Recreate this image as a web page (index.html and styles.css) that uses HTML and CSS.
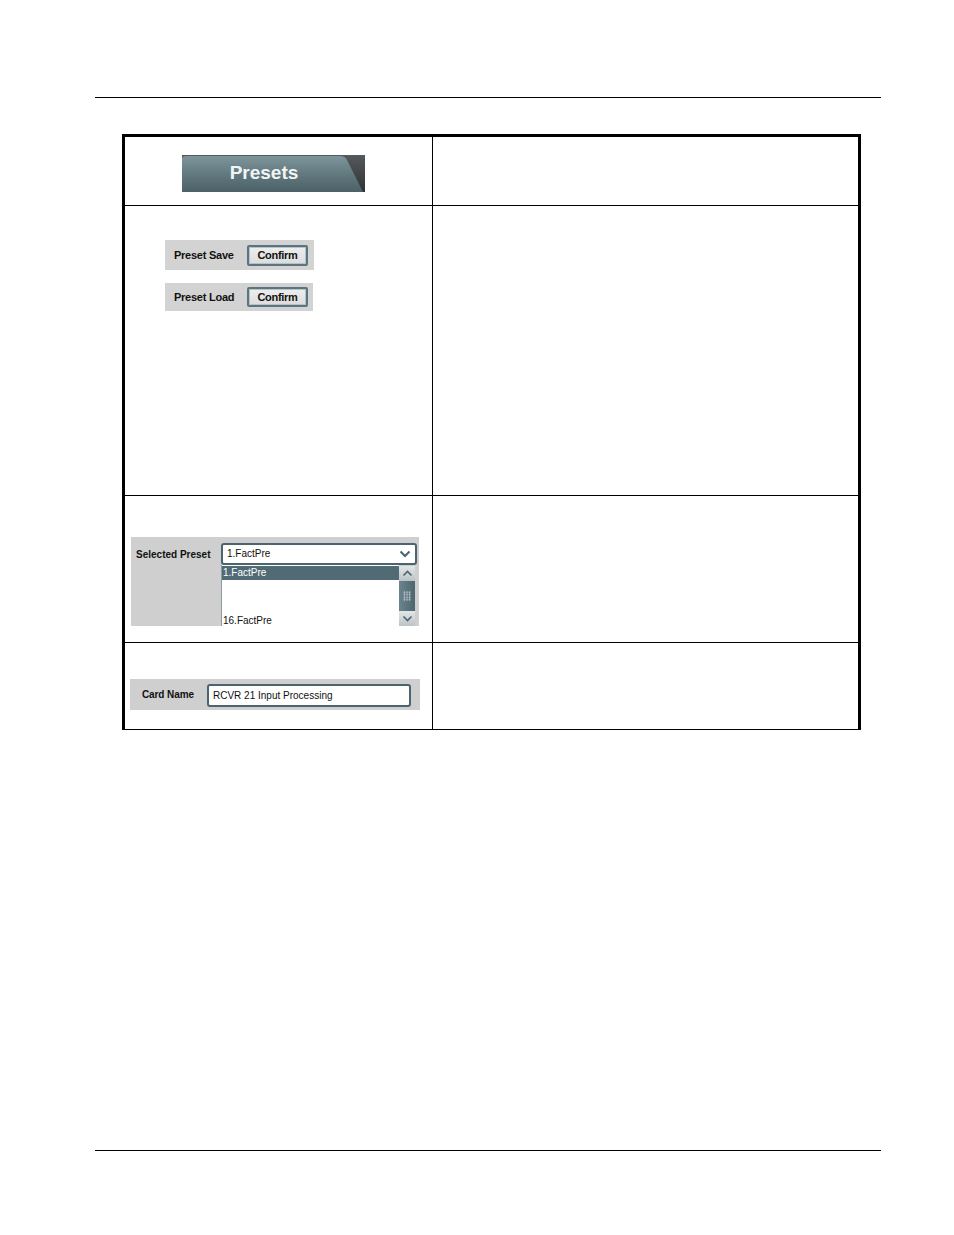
FILE: index.html
```html
<!DOCTYPE html>
<html>
<head>
<meta charset="utf-8">
<link rel="stylesheet" href="styles.css">
</head>
<body>
<div class="page">
  <div class="rule top-rule"></div>
  <div class="table">
    <div class="row r1">
      <div class="cell left c1">
        <svg class="tab" width="183" height="37" viewBox="0 0 183 37">
          <defs>
            <linearGradient id="tg" x1="0" y1="0" x2="0" y2="1">
              <stop offset="0" stop-color="#7e959c"/>
              <stop offset="0.5" stop-color="#627980"/>
              <stop offset="1" stop-color="#4b6067"/>
            </linearGradient>
            <linearGradient id="dg" x1="0" y1="0" x2="0" y2="1">
              <stop offset="0" stop-color="#55595b"/>
              <stop offset="1" stop-color="#2f3335"/>
            </linearGradient>
          </defs>
          <rect x="0" y="0" width="183" height="37" fill="url(#dg)"/>
          <path d="M0,37 L0,4 Q0,1 4,1 L158,1 Q163,1 165,5 L181,37 Z" fill="url(#tg)"/>
          <text x="82" y="24" text-anchor="middle" class="tab-text">Presets</text>
        </svg>
      </div>
      <div class="cell right"></div>
    </div>
    <div class="row r2">
      <div class="cell left c2">
        <div class="btn-panel save">
          <span class="lbl">Preset Save</span>
          <span class="btn">Confirm</span>
        </div>
        <div class="btn-panel load">
          <span class="lbl">Preset Load</span>
          <span class="btn">Confirm</span>
        </div>
      </div>
      <div class="cell right"></div>
    </div>
    <div class="row r3">
      <div class="cell left c3">
        <div class="sel-panel">
          <div class="sel-label">Selected Preset</div>
          <div class="sel-main">
            <div class="combo">
              <span class="combo-text">1.FactPre</span>
              <svg class="chev" width="12" height="8" viewBox="0 0 12 8"><path d="M1.5,1.5 L6,6 L10.5,1.5" fill="none" stroke="#4a6470" stroke-width="2"/></svg>
            </div>
            <div class="list">
              <div class="items">
                <div class="item selected">1.FactPre</div>
                <div class="item last">16.FactPre</div>
              </div>
              <div class="sbar">
                <div class="sbtn up"><svg width="11" height="7" viewBox="0 0 11 7"><path d="M1.5,5.5 L5.5,1.5 L9.5,5.5" fill="none" stroke="#4a6470" stroke-width="1.6"/></svg></div>
                <div class="thumb"><span class="grip"></span></div>
                <div class="sbtn down"><svg width="11" height="7" viewBox="0 0 11 7"><path d="M1.5,1.5 L5.5,5.5 L9.5,1.5" fill="none" stroke="#4a6470" stroke-width="1.6"/></svg></div>
              </div>
            </div>
          </div>
        </div>
      </div>
      <div class="cell right"></div>
    </div>
    <div class="row r4">
      <div class="cell left c4">
        <div class="name-panel">
          <span class="name-label">Card Name</span>
          <div class="textbox">RCVR 21 Input Processing</div>
        </div>
      </div>
      <div class="cell right"></div>
    </div>
  </div>
  <div class="spacer"></div>
  <div class="rule bottom-rule"></div>
</div>
</body>
</html>
```

FILE: styles.css
```css
html, body {
  margin: 0;
  padding: 0;
  background: #ffffff;
}
body {
  font-family: "Liberation Sans", Arial, sans-serif;
  color: #111;
}
.page {
  width: 954px;
  height: 1235px;
  display: flex;
  flex-direction: column;
}
.rule {
  height: 1px;
  background: #000;
  margin-left: 95px;
  width: 786px;
  flex: none;
}
.top-rule {
  margin-top: 97px;
}
.table {
  margin-top: 36px;
  margin-left: 122px;
  width: 739px;
  box-sizing: border-box;
  border-top: 3px solid #000;
  border-left: 3px solid #000;
  border-right: 3px solid #000;
  border-bottom: 1px solid #000;
  display: flex;
  flex-direction: column;
  flex: none;
}
.row {
  display: flex;
  border-bottom: 1px solid #000;
  flex: none;
}
.row.r4 {
  border-bottom: none;
}
.r1 { height: 68px; }
.r2 { height: 289px; }
.r3 { height: 146px; }
.r4 { height: 86px; }
.cell.left {
  width: 308px;
  flex: none;
  border-right: 1px solid #000;
  box-sizing: border-box;
}
.cell.right {
  flex: 1;
  min-width: 0;
}
.c1 {
  padding: 18px 0 0 57px;
}
.tab { display: block; }
.tab-text {
  font-family: "Liberation Sans", Arial, sans-serif;
  font-weight: bold;
  font-size: 19px;
  fill: #f2f4f4;
}
.c2 {
  padding: 34px 0 0 40px;
  display: flex;
  flex-direction: column;
  gap: 13px;
}
.btn-panel {
  background: #d3d3d3;
  width: 149px;
  display: flex;
  align-items: center;
  box-sizing: border-box;
  padding-left: 9px;
}
.btn-panel.save { height: 30px; }
.btn-panel.load { height: 28px; width: 148px; }
.lbl {
  font-weight: bold;
  font-size: 11px;
  letter-spacing: -0.25px;
  width: 73px;
}
.btn {
  width: 61px;
  height: 21px;
  box-sizing: border-box;
  border: 2px solid #5b7580;
  border-radius: 2px;
  background: linear-gradient(#eeeeee, #dcdcdc);
  font-size: 11px;
  font-weight: bold;
  letter-spacing: -0.3px;
  display: flex;
  align-items: center;
  justify-content: center;
  box-shadow: inset 0 0 0 1px #b7c2c6;
}
.load .btn { height: 20px; }
.c3 {
  padding: 41px 0 0 6px;
}
.sel-panel {
  width: 288px;
  height: 89px;
  background: #cfcfcf;
  display: flex;
  overflow: hidden;
}
.sel-label {
  font-weight: bold;
  font-size: 10px;
  width: 90px;
  padding: 12px 0 0 5px;
  box-sizing: border-box;
}
.sel-main {
  display: flex;
  flex-direction: column;
  padding-top: 6px;
}
.combo {
  width: 196px;
  height: 22px;
  box-sizing: border-box;
  border: 2px solid #4a6470;
  border-radius: 3px;
  background: #fff;
  display: flex;
  align-items: center;
  justify-content: space-between;
  padding: 0 4px 0 4px;
  font-size: 10px;
}
.chev { display: block; }
.list {
  width: 194px;
  height: 62px;
  background: #fff;
  display: flex;
  border-left: 1px solid #8a9aa0;
  box-sizing: border-box;
}
.items {
  flex: 1;
  display: flex;
  flex-direction: column;
  justify-content: space-between;
  font-size: 10px;
  padding-top: 1px;
}
.item {
  height: 14px;
  line-height: 14px;
  padding-left: 1px;
}
.item.selected {
  background: #516b74;
  color: #fff;
}
.item.last {
  height: 12px;
  line-height: 14px;
}
.sbar {
  width: 16px;
  display: flex;
  flex-direction: column;
  background: #c8cdcf;
}
.sbtn {
  height: 15px;
  background: linear-gradient(#e3e6e7, #bcc3c6);
  display: flex;
  align-items: center;
  justify-content: center;
}
.sbtn.up { margin-top: 1px; }
.thumb {
  flex: 1;
  background: linear-gradient(90deg, #6a848d, #4e666e);
  display: flex;
  align-items: center;
  justify-content: center;
}
.grip {
  width: 8px;
  height: 10px;
  background-image: radial-gradient(circle, #b9c7cc 0.8px, transparent 1px);
  background-size: 2.7px 2.5px;
}
.c4 {
  padding: 36px 0 0 5px;
}
.name-panel {
  width: 290px;
  height: 31px;
  background: #cfcfcf;
  display: flex;
  align-items: center;
}
.name-label {
  font-weight: bold;
  font-size: 10px;
  padding-left: 12px;
  width: 77px;
  box-sizing: border-box;
  letter-spacing: -0.1px;
}
.textbox {
  width: 204px;
  height: 23px;
  box-sizing: border-box;
  border: 2px solid #4a6470;
  border-radius: 3px;
  background: #fff;
  font-size: 10px;
  display: flex;
  align-items: center;
  padding-left: 4px;
  margin-top: 1px;
}
.spacer {
  height: 420px;
  flex: none;
}
```
